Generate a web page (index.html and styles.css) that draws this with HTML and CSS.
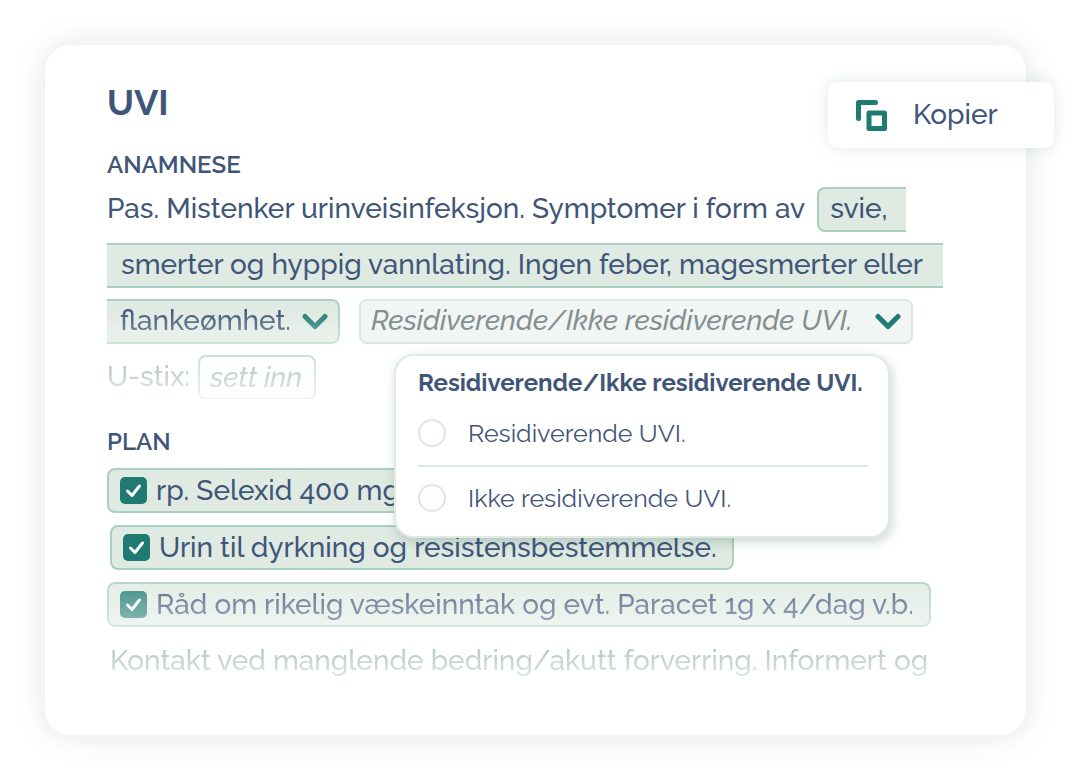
FILE: index.html
```html
<!DOCTYPE html>
<html lang="no">
<head>
    <meta charset="UTF-8">
    <meta name="viewport" content="width=device-width, initial-scale=1.0">
    <title>UVI</title>
    <link rel="stylesheet" href="styles.css">
</head>
<body>
    <main class="card">
        <button type="button" class="copy-btn">
            <svg class="copy-icon" viewBox="0 0 31 31" fill="none" stroke="currentColor" stroke-width="5" stroke-linecap="round" stroke-linejoin="round">
                <path d="M2.500 18.500V2.500H19.500"/>
                <rect x="13" y="13" width="15.500" height="15.500"/>
            </svg>
            Kopier
        </button>

        <h1>UVI</h1>

        <section class="note">
            <h2>ANAMNESE</h2>
            <div class="line">
                <span>Pas. Mistenker urinveisinfeksjon. Symptomer i form av</span>
                <span class="chip chip-start">svie,</span>
            </div>
            <div class="line">
                <span class="chip chip-middle">smerter og hyppig vannlating. Ingen feber, magesmerter eller</span>
            </div>
            <div class="line choices">
                <button type="button" class="chip chip-end fade-low">
                    flankeømhet.
                    <svg class="chevron" viewBox="0 0 26 17" fill="none" stroke="currentColor" stroke-width="5" stroke-linecap="round" stroke-linejoin="round"><path d="M3 3.500l10 10L23 3.500"/></svg>
                </button>
                <div class="dropdown">
                    <button type="button" class="chip chip-empty" aria-expanded="true">
                        Residiverende/Ikke residiverende UVI.
                        <svg class="chevron" viewBox="0 0 26 17" fill="none" stroke="currentColor" stroke-width="5" stroke-linecap="round" stroke-linejoin="round"><path d="M3 3.500l10 10L23 3.500"/></svg>
                    </button>
                    <div class="menu" role="radiogroup" aria-labelledby="menu-title">
                        <h3 id="menu-title">Residiverende/Ikke residiverende UVI.</h3>
                        <label class="option"><input type="radio" name="uvi">Residiverende UVI.</label>
                        <label class="option"><input type="radio" name="uvi">Ikke residiverende UVI.</label>
                    </div>
                </div>
            </div>
            <div class="line ustix-line fade-out">
                <label for="ustix">U-stix:</label>
                <input type="text" id="ustix" class="chip ustix" placeholder="sett inn">
            </div>
        </section>

        <section class="note plan">
            <h2>PLAN</h2>
            <label class="chip task task-wide">
                <span class="tick">
                    <input type="checkbox" checked>
                    <svg viewBox="0 0 27 27" fill="none" stroke="currentColor" stroke-width="3" stroke-linecap="round" stroke-linejoin="round"><path d="M7.500 14l4.500 4.500L19.500 9"/></svg>
                </span>
                rp. Selexid 400 mg
            </label>
            <label class="chip task task-shift">
                <span class="tick">
                    <input type="checkbox" checked>
                    <svg viewBox="0 0 27 27" fill="none" stroke="currentColor" stroke-width="3" stroke-linecap="round" stroke-linejoin="round"><path d="M7.500 14l4.500 4.500L19.500 9"/></svg>
                </span>
                Urin til dyrkning og resistensbestemmelse.
            </label>
            <label class="chip task fade-mid">
                <span class="tick">
                    <input type="checkbox" checked>
                    <svg viewBox="0 0 27 27" fill="none" stroke="currentColor" stroke-width="3" stroke-linecap="round" stroke-linejoin="round"><path d="M7.500 14l4.500 4.500L19.500 9"/></svg>
                </span>
                Råd om rikelig væskeinntak og evt. Paracet 1g x 4/dag v.b.
            </label>
            <p class="line task-shift fade-out">Kontakt ved manglende bedring/akutt forverring. Informert og</p>
        </section>
    </main>
</body>
</html>
```

FILE: styles.css
```css
* {
    box-sizing: border-box;
}
body {
    margin: 0;
    padding: 45px 54px 45px 45px;
    background: #fff;
    color: #3f5679;
    font-family: Raleway, Lato, sans-serif;
    font-size: 28px;
    font-weight: 500;
    line-height: 32px;
}
h1, h2, h3, p {
    margin: 0;
}
button, input {
    font: inherit;
    color: inherit;
}
button {
    cursor: pointer;
}
.card {
    position: relative;
    padding: 37px 62px 52px;
    border-radius: 26px;
    background: #fff;
    box-shadow: 0 0 28px 4px rgba(60, 95, 80, 0.12);
}
h1 {
    font-size: 36px;
    line-height: 40px;
    font-weight: 700;
}
h2 {
    font-size: 24px;
    line-height: 32px;
    font-weight: 600;
}

/* copy button hangs over the card edge */
.copy-btn {
    position: absolute;
    top: 37px;
    right: -28px;
    display: flex;
    align-items: center;
    gap: 26px;
    width: 226px;
    height: 66px;
    padding: 0 28px;
    border: none;
    border-radius: 10px;
    background: #fff;
    box-shadow: 0 0 16px rgba(60, 110, 90, 0.16);
}
.copy-icon {
    width: 31px;
    height: 31px;
    color: #1f7a72;
}

.note {
    display: flex;
    flex-direction: column;
    align-items: flex-start;
    gap: 12px;
    margin-top: 27px;
    white-space: nowrap;
}
.note h2 {
    margin-bottom: -6px;
}
.plan {
    margin-top: 27px;
}
.plan h2 {
    margin-bottom: -2px;
}
.line {
    display: flex;
    align-items: center;
    gap: 12px;
    height: 44px;
}
.choices {
    gap: 19px;
}
.chip {
    display: flex;
    align-items: center;
    gap: 11px;
    height: 45px;
    padding: 0 11px;
    border: 2px solid #a9cfc4;
    border-radius: 8px;
    background: #dfeae2;
}
.chip-start {
    padding-right: 18px;
    border-right: none;
    border-radius: 8px 0 0 8px;
}
.chip-middle {
    padding: 0 20px 0 14px;
    border-left: none;
    border-right: none;
    border-radius: 0;
}
.chip-end {
    padding: 0 10px 0 13px;
    border-left: none;
    border-radius: 0 8px 8px 0;
}
.chip-empty {
    gap: 22px;
    padding: 0 10px;
    border-color: #dbe9e0;
    background: #f1f6f4;
    color: #84908f;
    font-style: italic;
}
.chevron {
    width: 26px;
    height: 17px;
    color: #1f7a72;
}

.dropdown {
    position: relative;
}
.menu {
    position: absolute;
    z-index: 2;
    top: 55px;
    left: 35px;
    width: 496px;
    padding: 11px 20px 7px 22px;
    border: 2px solid #dfeae4;
    border-radius: 20px;
    background: #fff;
    box-shadow: 2px 4px 12px rgba(50, 90, 85, 0.25);
    font-size: 25px;
    font-weight: 400;
}
.menu h3 {
    margin-bottom: 2px;
    font-size: 24px;
    line-height: 32px;
    font-weight: 700;
}
.option {
    display: flex;
    align-items: center;
    gap: 22px;
    height: 64px;
}
.option + .option {
    border-top: 2px solid #dfe7e6;
}
.option input {
    appearance: none;
    width: 28px;
    height: 28px;
    margin: 0;
    border: 2px solid #dfe7e6;
    border-radius: 50%;
    background: #fff;
}
.option input:checked {
    border: 8px solid #1f7a72;
}

.ustix-line {
    gap: 8px;
}
.ustix {
    width: 118px;
    padding: 0 10px;
    border-color: #a9cfc4;
    background: #fbfdfc;
    font-style: italic;
}
.ustix::placeholder {
    color: #84a09c;
    opacity: 1;
}

.task {
    padding-right: 15px;
    gap: 9px;
}
.task-wide {
    min-width: 320px;
}
.task-shift {
    margin-left: 3px;
}
.tick {
    display: grid;
    color: #fff;
}
.tick > * {
    grid-area: 1 / 1;
    width: 27px;
    height: 27px;
    pointer-events: none;
}
.tick input {
    appearance: none;
    margin: 0;
    border-radius: 5px;
    background: #1f7a72;
    pointer-events: auto;
}

/* text dissolves towards the end of each section */
.fade-low {
    mask-image: linear-gradient(#000 20%, rgba(0, 0, 0, 0.6));
}
.fade-mid {
    mask-image: linear-gradient(rgba(0, 0, 0, 0.85), rgba(0, 0, 0, 0.5));
}
.fade-out {
    color: #7f9c9c;
    mask-image: linear-gradient(rgba(0, 0, 0, 0.65), rgba(0, 0, 0, 0.2));
}
```
